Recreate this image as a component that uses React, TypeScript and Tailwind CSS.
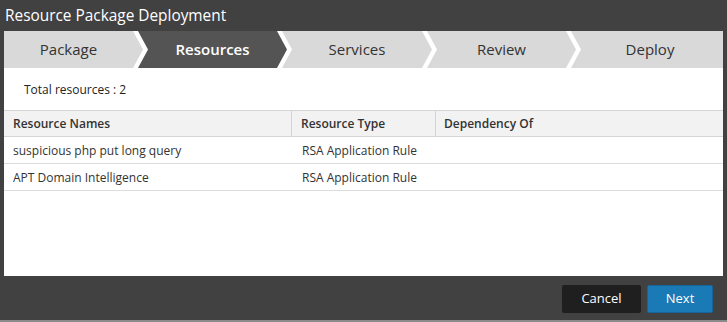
const steps = [
  { label: "Package", width: "w-[139px] pr-[10px]", clip: "[clip-path:polygon(0_0,129px_0,100%_50%,129px_100%,0_100%)]" },
  { label: "Resources", width: "w-[149px]", clip: "[clip-path:polygon(0_0,139px_0,100%_50%,139px_100%,0_100%,10px_50%)]", active: true },
  { label: "Services", width: "w-[150px]", clip: "[clip-path:polygon(0_0,140px_0,100%_50%,140px_100%,0_100%,10px_50%)]" },
  { label: "Review", width: "w-[149px]", clip: "[clip-path:polygon(0_0,139px_0,100%_50%,139px_100%,0_100%,10px_50%)]" },
  { label: "Deploy", width: "flex-1 pl-[6px]", clip: "[clip-path:polygon(0_0,100%_0,100%_100%,0_100%,10px_50%)]" },
];

const rows = [
  { name: "suspicious php put long query", type: "RSA Application Rule", dep: "" },
  { name: "APT Domain Intelligence", type: "RSA Application Rule", dep: "" },
];

const App = () => {
  return (
    <div className="w-[727px] h-[322px] bg-[#414141] flex flex-col font-['Open_Sans',sans-serif] overflow-hidden">
      <div className="h-[31px] flex items-center pl-[5px] text-white text-[15.4px] leading-none">
        Resource Package Deployment
      </div>

      <div className="ml-[4px] w-[719px] h-[245px] bg-white flex flex-col">
        <div className="flex h-[37px]">
          {steps.map((s, i) => (
            <div
              key={s.label}
              className={`${s.width} ${s.clip} ${i > 0 ? "-ml-[5px]" : ""} h-full flex items-center justify-center text-[15px] ${
                s.active ? "bg-[#545454] text-white font-semibold" : "bg-[#d9d9d9] text-[#333]"
              }`}
            >
              {s.label}
            </div>
          ))}
        </div>

        <div className="h-[42px] flex items-center pl-[20px] pt-[1px] text-[12px] text-[#222]">
          Total resources : 2
        </div>

        <div className="flex flex-col text-[12px] text-[#333]">
          <div className="flex h-[27px] bg-[#f2f2f2] border-y border-[#d4d4d4] font-semibold">
            <div className="w-[288px] pl-[9px] flex items-center border-r border-[#d4d4d4]">Resource Names</div>
            <div className="w-[144px] pl-[9px] flex items-center border-r border-[#d4d4d4]">Resource Type</div>
            <div className="flex-1 pl-[8px] flex items-center">Dependency Of</div>
          </div>
          {rows.map((r) => (
            <div key={r.name} className="flex h-[27px] pt-[1px] border-b border-[#dcdcdc]">
              <div className="w-[288px] pl-[9px] flex items-center">{r.name}</div>
              <div className="w-[144px] pl-[10px] flex items-center">{r.type}</div>
              <div className="flex-1 pl-[8px] flex items-center">{r.dep}</div>
            </div>
          ))}
        </div>
      </div>

      <div className="h-[44px] flex items-center justify-end gap-[6px] pr-[14px] pt-[1px]">
        <button className="w-[79px] h-[28px] rounded-[2px] bg-[#1f1f1f] text-white text-[13px] font-medium">
          Cancel
        </button>
        <button className="w-[66px] h-[28px] rounded-[2px] bg-[#1a7ab5] border border-[#14659b] text-white text-[13px] font-medium">
          Next
        </button>
      </div>
      <div className="h-[2px] bg-[#8a8a8a]" />
    </div>
  );
};

export default App;
